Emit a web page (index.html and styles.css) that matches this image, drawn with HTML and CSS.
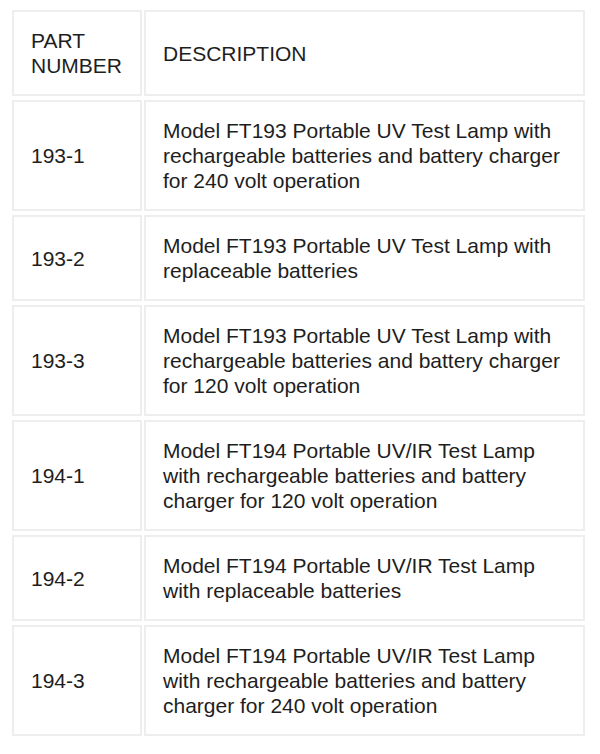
FILE: index.html
```html
<!DOCTYPE html>
<html>
<head>
<meta charset="utf-8">
<link rel="stylesheet" href="styles.css">
</head>
<body>
<table class="parts">
  <thead>
    <tr><th class="col-part">PART NUMBER</th><th class="col-desc">DESCRIPTION</th></tr>
  </thead>
  <tbody>
    <tr><td>193-1</td><td>Model FT193 Portable UV Test Lamp with rechargeable batteries and battery charger for 240 volt operation</td></tr>
    <tr><td>193-2</td><td>Model FT193 Portable UV Test Lamp with replaceable batteries</td></tr>
    <tr><td>193-3</td><td>Model FT193 Portable UV Test Lamp with rechargeable batteries and battery charger for 120 volt operation</td></tr>
    <tr><td>194-1</td><td>Model FT194 Portable UV/IR Test Lamp with rechargeable batteries and battery charger for 120 volt operation</td></tr>
    <tr><td>194-2</td><td>Model FT194 Portable UV/IR Test Lamp with replaceable batteries</td></tr>
    <tr><td>194-3</td><td>Model FT194 Portable UV/IR Test Lamp with rechargeable batteries and battery charger for 240 volt operation</td></tr>
  </tbody>
</table>
</body>
</html>
```
FILE: styles.css
```css
html, body {
  margin: 0;
  padding: 0;
  background: #ffffff;
}
body {
  font-family: "Liberation Sans", Arial, sans-serif;
  font-size: 21px;
  line-height: 25px;
  color: #1e1e1e;
}
.parts {
  margin: 6px 0 0 10px;
  width: 577px;
  border-collapse: separate;
  border-spacing: 2px 4px;
}
.parts th,
.parts td {
  border: 2px solid #eeeeee;
  padding: 16px 17px;
  text-align: left;
  vertical-align: middle;
  font-weight: normal;
}
.col-part {
  width: 92px;
}
```
